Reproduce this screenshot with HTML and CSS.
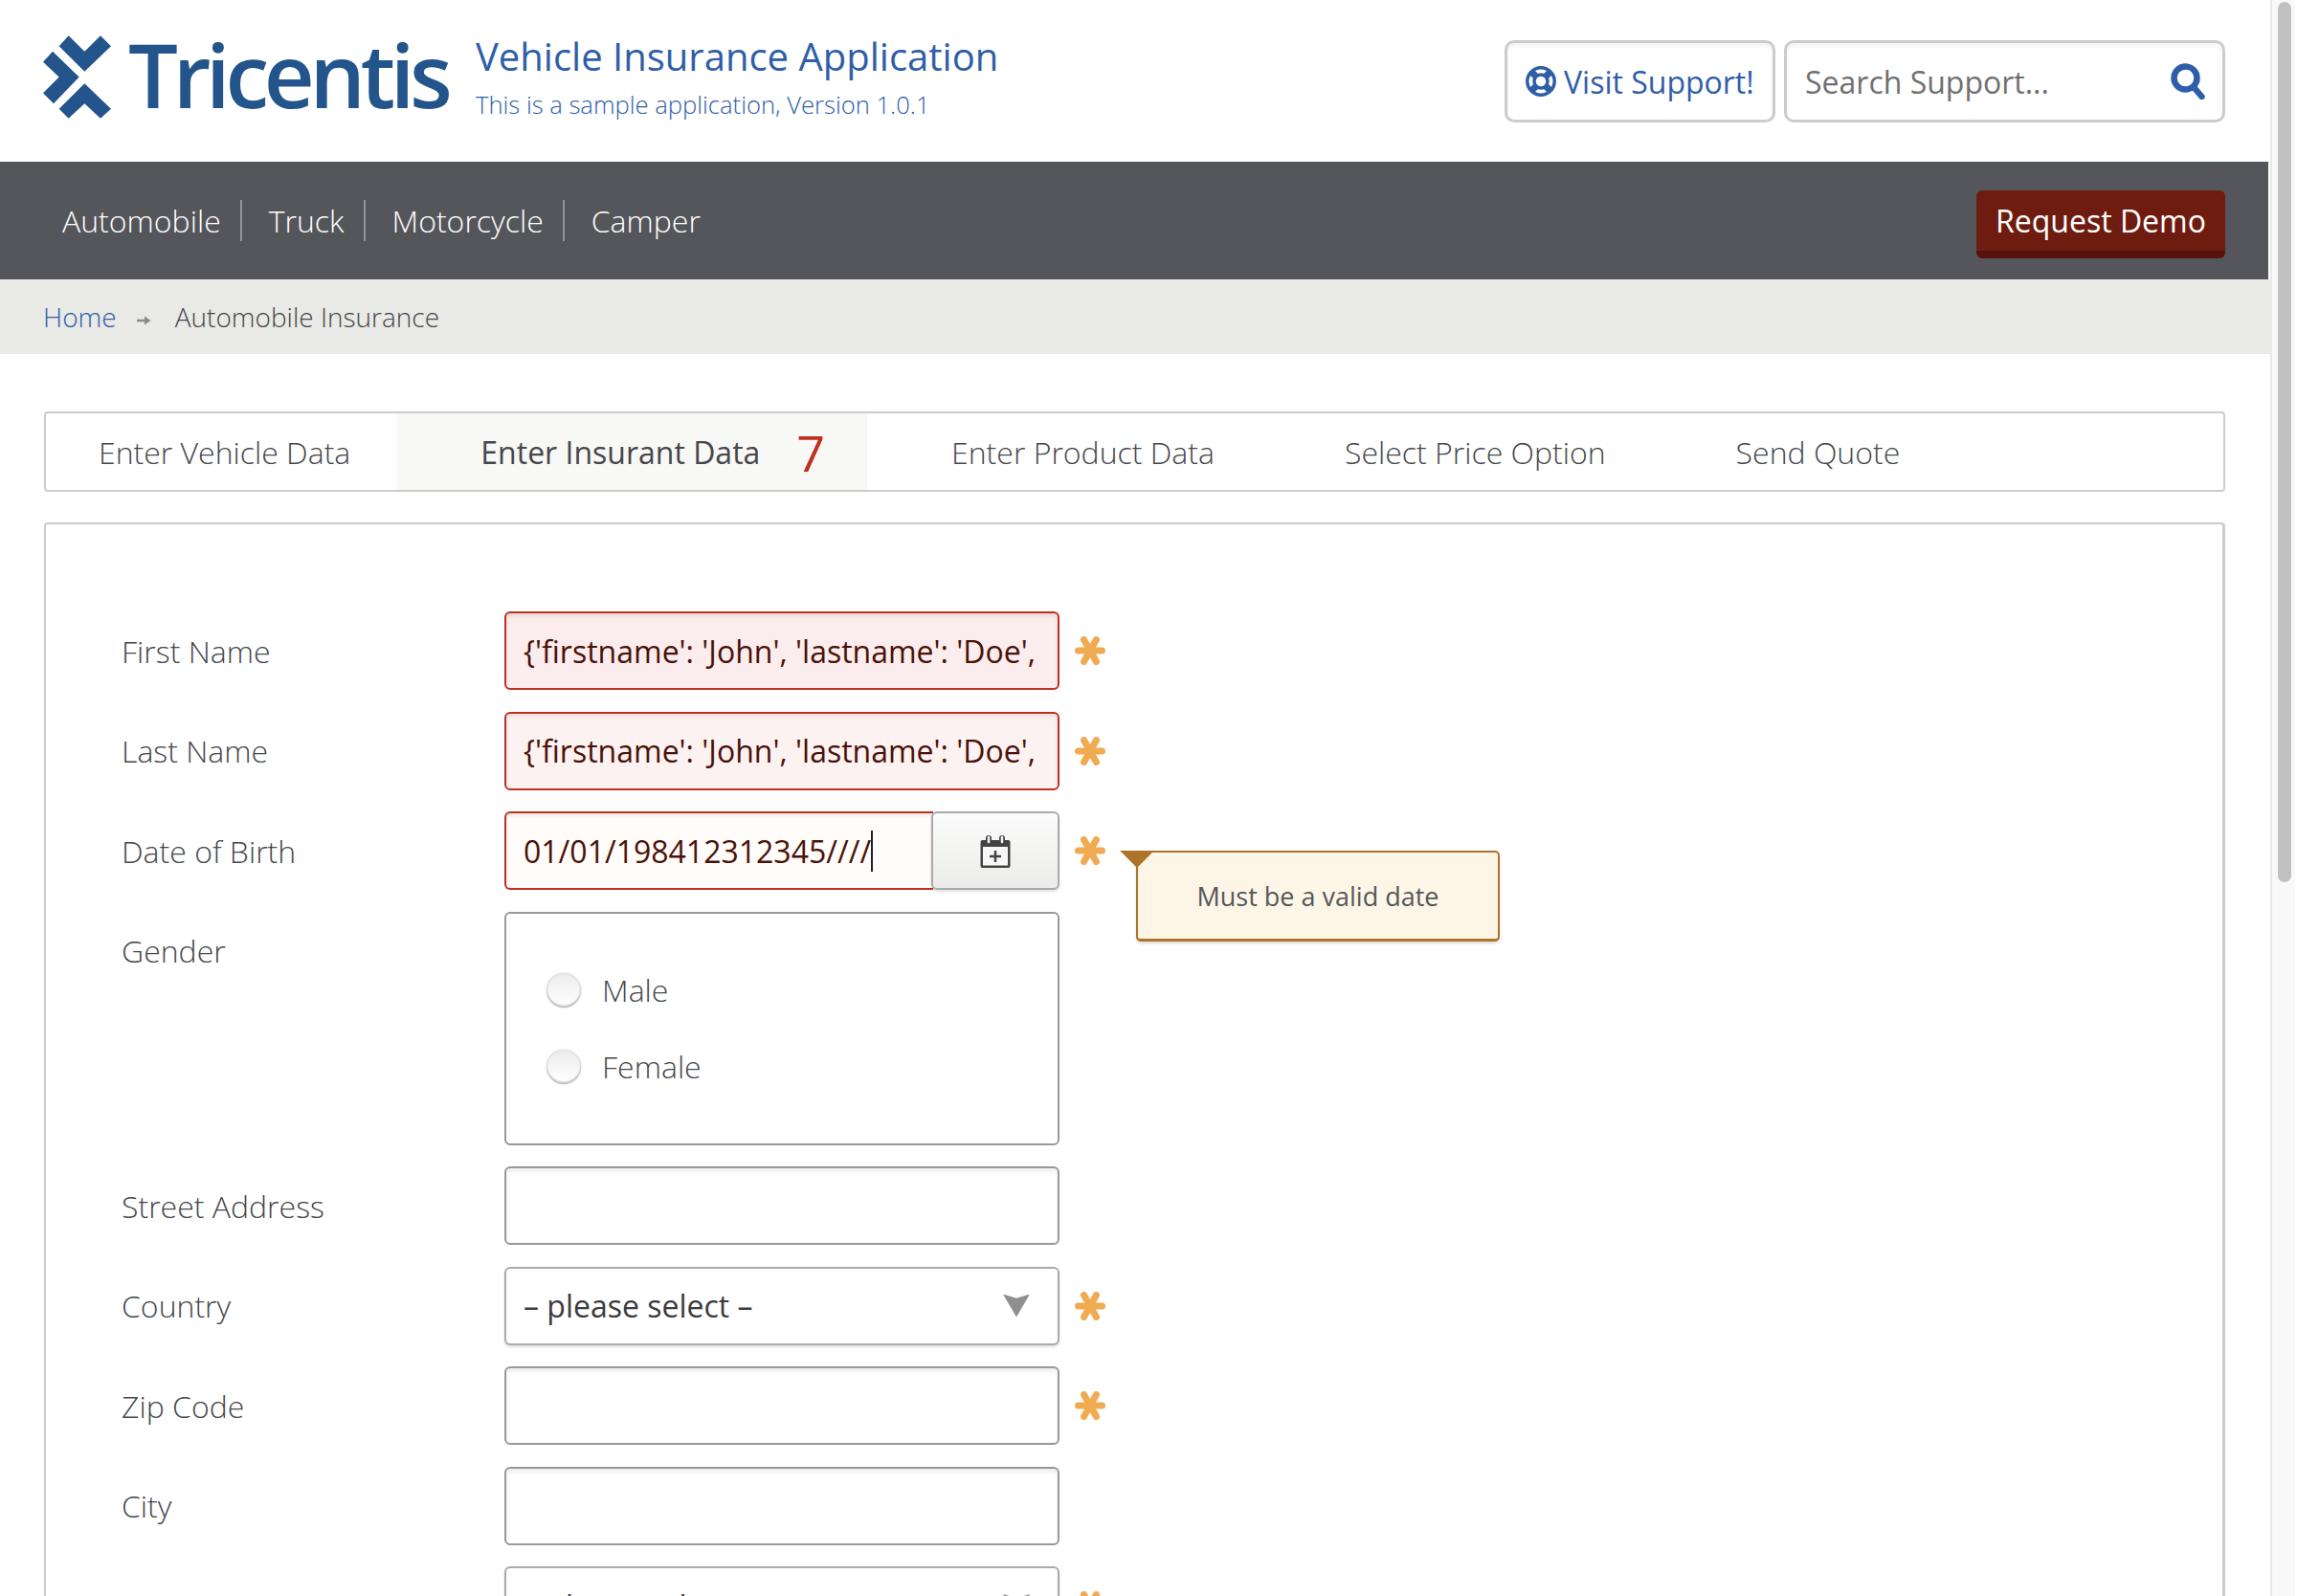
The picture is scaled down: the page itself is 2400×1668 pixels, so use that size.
FILE: index.html
```html
<!DOCTYPE html>
<html lang="en">
<head>
    <meta charset="UTF-8">
    <meta name="viewport" content="width=device-width, initial-scale=1.0">
    <title>Vehicle Insurance Application</title>
    <link rel="stylesheet" href="styles.css">
</head>
<body>
    <div class="page">
        <!-- Header -->
        <header class="top">
            <div class="logo">
                <svg class="logo-mark" viewBox="75 45 213 260">
                    <path d="M155 45L205 95L255 45L288 78L205 158L125 78Z"/>
                    <path d="M105 95L188 175L108 258L75 225L125 175L75 128Z"/>
                    <path d="M205 195L288 275L255 305L205 258L155 305L125 275Z"/>
                </svg>
                <span class="logo-name">Tricentis</span>
            </div>
            <div class="app-title">
                <div class="app-name">Vehicle Insurance Application</div>
                <div class="app-sub">This is a sample application, Version 1.0.1</div>
            </div>
            <div class="top-tools">
                <a class="support-btn">
                    <svg class="ring-icon" viewBox="0 0 32 32">
                        <circle cx="16" cy="16" r="14.200" fill="none" stroke="#2f5ea8" stroke-width="3.500"/>
                        <circle cx="16" cy="16" r="7" fill="none" stroke="#2f5ea8" stroke-width="3.500"/>
                        <path d="M6 6L11 11M26 6L21 11M6 26L11 21M26 26L21 21" stroke="#2f5ea8" stroke-width="7"/>
                    </svg>
                    Visit Support!
                </a>
                <div class="search-box">
                    <span class="search-text">Search Support...</span>
                    <svg class="search-icon" viewBox="0 0 36 38">
                        <circle cx="15.500" cy="15.500" r="12" fill="none" stroke="#2f5ea8" stroke-width="6.500"/>
                        <path d="M24 25L32.500 35" stroke="#2f5ea8" stroke-width="6.500" stroke-linecap="round"/>
                    </svg>
                </div>
            </div>
        </header>

        <!-- Main nav -->
        <nav class="mainnav">
            <a class="nav-item">Automobile</a>
            <a class="nav-item">Truck</a>
            <a class="nav-item">Motorcycle</a>
            <a class="nav-item">Camper</a>
            <a class="demo-btn">Request Demo</a>
        </nav>

        <div class="crumbs">
            <a class="crumb-link">Home</a>
            <svg class="crumb-arrow" viewBox="0 0 16 10">
                <path d="M1 5H11" stroke="#8a8a8a" stroke-width="2.500"/>
                <path d="M9 0.500L15.500 5L9 9.500Z" fill="#8a8a8a"/>
            </svg>
            <span>Automobile Insurance</span>
        </div>

        <main class="content">
            <!-- Steps -->
            <ul class="steps">
                <li class="step">Enter Vehicle Data</li>
                <li class="step active">Enter Insurant Data <span class="step-count">7</span></li>
                <li class="step">Enter Product Data</li>
                <li class="step">Select Price Option</li>
                <li class="step">Send Quote</li>
            </ul>

            <form class="panel">
                <div class="row">
                    <label class="field-label">First Name</label>
                    <input class="field error" type="text" value="{'firstname': 'John', 'lastname': 'Doe', 'age': 30}">
                    <svg class="req" viewBox="0 0 32 30"><use href="#star"/></svg>
                </div>
                <div class="row">
                    <label class="field-label">Last Name</label>
                    <input class="field error light" type="text" value="{'firstname': 'John', 'lastname': 'Doe', 'age': 30}">
                    <svg class="req" viewBox="0 0 32 30"><use href="#star"/></svg>
                </div>
                <div class="row">
                    <label class="field-label">Date of Birth</label>
                    <div class="date-group">
                        <div class="date-input">01/01/198412312345////<span class="caret"></span></div>
                        <div class="date-btn">
                            <svg class="cal-icon" viewBox="0 0 32 35">
                                <path d="M0.500 8a2 2 0 0 1 2-2H6V4a3 3 0 0 1 6 0v2h8V4a3 3 0 0 1 6 0v2h3.500a2 2 0 0 1 2 2v25a2 2 0 0 1-2 2h-27a2 2 0 0 1-2-2Z" fill="#444"/>
                                <path d="M9 3V8M23 3V8" stroke="#f7f7f7" stroke-width="2.500" stroke-linecap="round"/>
                                <rect x="3" y="13" width="26" height="19.500" fill="#f7f7f7"/>
                                <path d="M16 17V29M10 23H22" stroke="#444" stroke-width="2.500"/>
                            </svg>
                        </div>
                    </div>
                    <svg class="req" viewBox="0 0 32 30"><use href="#star"/></svg>
                    <div class="tip">Must be a valid date</div>
                </div>
                <div class="row top-aligned">
                    <label class="field-label">Gender</label>
                    <div class="radio-box">
                        <div class="radio-line"><span class="radio"></span>Male</div>
                        <div class="radio-line"><span class="radio"></span>Female</div>
                    </div>
                </div>
                <div class="row">
                    <label class="field-label">Street Address</label>
                    <input class="field" type="text">
                </div>
                <div class="row">
                    <label class="field-label">Country</label>
                    <div class="select">– please select –<span class="select-arrow"></span></div>
                    <svg class="req" viewBox="0 0 32 30"><use href="#star"/></svg>
                </div>
                <div class="row">
                    <label class="field-label">Zip Code</label>
                    <input class="field" type="text">
                    <svg class="req" viewBox="0 0 32 30"><use href="#star"/></svg>
                </div>
                <div class="row">
                    <label class="field-label">City</label>
                    <input class="field" type="text">
                </div>
                <div class="row">
                    <label class="field-label">Occupation</label>
                    <div class="select">– please select –<span class="select-arrow"></span></div>
                    <svg class="req" viewBox="0 0 32 30"><use href="#star"/></svg>
                </div>
            </form>
        </main>
    </div>

    <div class="scrollbar"><div class="scroll-thumb"></div></div>

    <svg class="defs" width="0" height="0">
        <symbol id="star" viewBox="0 0 32 30">
            <path d="M3.500 15H28.500M9.500 3.500L22.500 26.500M22.500 3.500L9.500 26.500" stroke="#f0ab52" stroke-width="7" stroke-linecap="round"/>
        </symbol>
    </svg>
</body>
</html>
```
FILE: styles.css
```css
html, body {
    margin: 0;
    height: 1668px;
    overflow: hidden;
}
body {
    display: flex;
    font-family: "Open Sans", "Liberation Sans", sans-serif;
    font-size: 32px;
    color: #46474c;
    background-color: #fff;
}
.defs {
    position: absolute;
}
.page {
    width: 2372px;
    flex: none;
}

/* Header */
.top {
    display: flex;
    align-items: center;
    height: 169px;
    padding: 0 47px 0 45px;
    box-sizing: border-box;
}
.logo {
    display: flex;
    align-items: center;
    width: 452px;
}
.logo-mark {
    width: 71px;
    height: 87px;
    fill: #23558c;
    flex: none;
    margin-top: -8px;
}
.logo-name {
    margin-left: 18px;
    margin-top: -14px;
    font-size: 92px;
    line-height: 110px;
    font-weight: 600;
    letter-spacing: -5.300px;
    color: #23558c;
}
.app-title {
    color: #2f5ea8;
}
.app-name {
    font-size: 40px;
    line-height: 58px;
    margin-top: -11px;
}
.app-sub {
    font-size: 25.600px;
    font-weight: 300;
    line-height: 36px;
    margin-top: 4px;
}
.top-tools {
    display: flex;
    gap: 9px;
    margin-left: auto;
    margin-top: 1px;
}
.support-btn, .search-box {
    display: flex;
    align-items: center;
    height: 86px;
    box-sizing: border-box;
    border: 3px solid #ccc;
    border-radius: 10px;
    box-shadow: inset 0 3px 4px rgba(0, 0, 0, 0.05);
    font-size: 32px;
}
.support-btn {
    width: 283px;
    padding-left: 19px;
    gap: 8px;
    color: #2f5ea8;
}
.ring-icon {
    width: 32px;
    height: 32px;
}
.search-box {
    width: 461px;
    padding: 0 18px 0 19px;
    justify-content: space-between;
    color: #707070;
}
.search-icon {
    width: 36px;
    height: 38px;
}

/* Main nav */
.mainnav {
    display: flex;
    align-items: center;
    height: 123px;
    padding: 0 45px 0 35px;
    background-color: #55565b;
    color: #fff;
    margin-right: 2px;
}
.nav-item {
    font-weight: 300;
    line-height: 43px;
    padding: 0 20px 0 28px;
    border-right: 2px solid #94959a;
}
.nav-item:first-child {
    padding-left: 30px;
}
.nav-item:nth-child(4) {
    border-right: none;
}
.demo-btn {
    margin-left: auto;
    margin-top: 8px;
    width: 260px;
    height: 71px;
    box-sizing: border-box;
    border-bottom: 8px solid #55130c;
    border-radius: 6px;
    background-color: #6f1c10;
    text-align: center;
    font-size: 32px;
    line-height: 63px;
}

.crumbs {
    display: flex;
    align-items: center;
    height: 78px;
    padding-left: 45px;
    background-color: #e9e9e5;
    font-size: 28px;
    font-weight: 300;
}
.crumb-link {
    color: #2f5ea8;
}
.crumb-arrow {
    width: 16px;
    height: 10px;
    margin: 8px 25px 0 20px;
}

/* Steps */
.content {
    padding: 60px 47px 0 46px;
}
.steps {
    display: flex;
    height: 84px;
    box-sizing: border-box;
    margin: 0;
    padding: 0;
    list-style: none;
    border: 2px solid #ccc;
    border-radius: 4px;
    font-weight: 300;
    font-size: 32px;
}
.step {
    display: flex;
    align-items: center;
    padding: 0 48px 0 88px;
}
.step:first-child {
    padding-left: 55px;
}
.step.active {
    padding-right: 44px;
    background-color: #f8f8f6;
    font-weight: 400;
}
.step-count {
    margin-left: 38px;
    font-size: 52px;
    font-weight: 500;
    color: #c03020;
}

/* Form */
.panel {
    margin-top: 32px;
    padding: 91px 0 0 79px;
    border: 2px solid #ccc;
    border-right-width: 3px;
    border-radius: 4px;
}
.row {
    position: relative;
    display: flex;
    align-items: center;
    margin-bottom: 22.500px;
}
.row.top-aligned {
    align-items: flex-start;
}
.top-aligned .field-label {
    margin-top: 19px;
}
.field-label {
    width: 400px;
    flex: none;
    font-weight: 300;
}
.field, .select, .date-group, .radio-box {
    width: 580px;
    box-sizing: border-box;
    flex: none;
}
.field, .select, .date-input {
    height: 82px;
    box-sizing: border-box;
    padding: 0 18px;
    border: 2px solid #999;
    border-radius: 6px;
    font-family: inherit;
    font-size: 32px;
    color: #4a1208;
    background-color: #fff;
    box-shadow: inset 0 3px 4px rgba(0, 0, 0, 0.08);
    outline: none;
}
.field.error, .date-input {
    border-color: #c03020;
    background-color: #fbeded;
}
.field.light {
    background-color: #fdf2f2;
}
.date-group {
    display: flex;
}
.date-input {
    flex: 1;
    display: flex;
    align-items: center;
    white-space: nowrap;
    background-color: #fffcfa;
    border-right: none;
    border-radius: 6px 0 0 6px;
}
.caret {
    width: 2px;
    height: 43px;
    background-color: #222;
}
.date-btn {
    display: flex;
    align-items: center;
    justify-content: center;
    width: 134px;
    height: 82px;
    flex: none;
    margin-left: -2px;
    box-sizing: border-box;
    border: 2px solid #aaa;
    border-radius: 6px;
    background: linear-gradient(#fcfcfc, #ebebe9);
    box-shadow: 0 2px 3px rgba(0, 0, 0, 0.12);
}
.cal-icon {
    width: 32px;
    height: 35px;
}
.req {
    width: 32px;
    height: 30px;
    margin-left: 16px;
}
.tip {
    position: absolute;
    left: 1060px;
    top: 41px;
    width: 380px;
    height: 95px;
    box-sizing: border-box;
    border: 2px solid #ab7428;
    border-bottom-width: 3px;
    border-radius: 5px;
    background-color: #fdf6e6;
    box-shadow: 0 2px 3px rgba(0, 0, 0, 0.15);
    text-align: center;
    font-size: 27px;
    line-height: 92px;
    color: #55565b;
}
.tip::before {
    content: "";
    position: absolute;
    left: -19px;
    top: -2px;
    border-style: solid;
    border-width: 18px 18px 0;
    border-color: #ab7428 transparent transparent;
}
.radio-box {
    height: 244px;
    padding: 40px 0 0 42px;
    border: 2px solid #999;
    border-radius: 6px;
}
.radio-line {
    display: flex;
    align-items: center;
    gap: 22px;
    height: 80px;
    font-weight: 300;
}
.radio {
    width: 36px;
    height: 36px;
    border-radius: 50%;
    background: linear-gradient(#ececec, #fff);
    box-shadow: inset 0 -2px 2px #bbb, inset 0 0 2px #c4c4c4, 0 0 2px #ccc;
}
.select {
    position: relative;
    display: flex;
    align-items: center;
    color: #3c3c3c;
    border-color: #aaa;
    box-shadow: 0 2px 3px rgba(0, 0, 0, 0.12);
}
.select-arrow {
    position: absolute;
    right: 29px;
    top: 27px;
    width: 28px;
    height: 24px;
    background-color: #8f8f8f;
    clip-path: polygon(0 0, 50% 18%, 100% 0, 50% 100%);
}

/* Scrollbar */
.scrollbar {
    flex: none;
    width: 26px;
    height: 1668px;
    box-sizing: border-box;
    padding: 2px 4px 0 6px;
    border-left: 2px solid #e8e8e8;
    background-color: #f9f9f9;
}
.scroll-thumb {
    height: 920px;
    border-radius: 8px;
    background-color: #c1c1c1;
}
```
